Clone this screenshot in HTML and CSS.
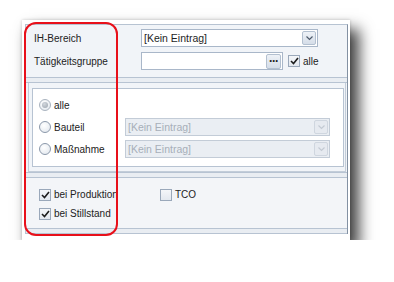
FILE: index.html
```html
<!DOCTYPE html>
<html lang="de">
<head>
    <meta charset="UTF-8">
    <title>IH-Bereich Filter</title>
    <link rel="stylesheet" href="styles.css">
</head>
<body>
    <div class="shot">
        <div class="window">
            <div class="sec top">
                <div class="row">
                    <span class="label">IH-Bereich</span>
                    <div class="combo">
                        <span class="value">[Kein Eintrag]</span>
                        <span class="drop"><svg width="9" height="6" viewBox="0 0 9 6"><path d="M1.5 1.5 L4.5 4.5 L7.5 1.5" fill="none" stroke="#4d5a6b" stroke-width="1.2"/></svg></span>
                    </div>
                </div>
                <div class="row">
                    <span class="label">Tätigkeitsgruppe</span>
                    <div class="textbox">
                        <span class="dots">&middot;&middot;&middot;</span>
                    </div>
                    <span class="check checked"><svg width="9" height="8" viewBox="0 0 9 8"><path d="M1 4 L3.5 6.5 L8 1" fill="none" stroke="#1d1d1d" stroke-width="1.6"/></svg></span>
                    <span class="check-label">alle</span>
                </div>
            </div>
            <div class="sep"></div>
            <div class="sec mid">
                <div class="panel">
                    <div class="group">
                        <div class="opt">
                            <span class="radio selected"><span class="dot"></span></span>
                            <span class="opt-label">alle</span>
                        </div>
                        <div class="opt">
                            <span class="radio"></span>
                            <span class="opt-label">Bauteil</span>
                            <div class="combo disabled">
                                <span class="value">[Kein Eintrag]</span>
                                <span class="drop"><svg width="9" height="6" viewBox="0 0 9 6"><path d="M1.5 1.5 L4.5 4.5 L7.5 1.5" fill="none" stroke="#c3cad3" stroke-width="1.2"/></svg></span>
                            </div>
                        </div>
                        <div class="opt">
                            <span class="radio"></span>
                            <span class="opt-label">Maßnahme</span>
                            <div class="combo disabled">
                                <span class="value">[Kein Eintrag]</span>
                                <span class="drop"><svg width="9" height="6" viewBox="0 0 9 6"><path d="M1.5 1.5 L4.5 4.5 L7.5 1.5" fill="none" stroke="#c3cad3" stroke-width="1.2"/></svg></span>
                            </div>
                        </div>
                    </div>
                </div>
            </div>
            <div class="sep"></div>
            <div class="sec bottom">
                <div class="flags">
                    <div class="flag">
                        <span class="check checked"><svg width="9" height="8" viewBox="0 0 9 8"><path d="M1 4 L3.5 6.5 L8 1" fill="none" stroke="#1d1d1d" stroke-width="1.6"/></svg></span>
                        <span class="check-label">bei Produktion</span>
                    </div>
                    <div class="flag">
                        <span class="check"></span>
                        <span class="check-label">TCO</span>
                    </div>
                    <div class="flag">
                        <span class="check checked"><svg width="9" height="8" viewBox="0 0 9 8"><path d="M1 4 L3.5 6.5 L8 1" fill="none" stroke="#1d1d1d" stroke-width="1.6"/></svg></span>
                        <span class="check-label">bei Stillstand</span>
                    </div>
                </div>
            </div>
            <div class="sep last"></div>
        </div>
        <div class="marker"></div>
    </div>
</body>
</html>
```

FILE: styles.css
```css
body {
    margin: 0;
    background: #fff;
    font-family: "Liberation Sans", Arial, sans-serif;
    font-size: 10px;
    color: #222;
}
.shot {
    position: relative;
    margin: 20px 0 0 22px;
    width: 328px;
    height: 220px;
    box-sizing: border-box;
    padding: 4px 0 0 3px;
    background: #fff;
    box-shadow: 8px 10px 14px 1px rgba(0, 0, 0, 0.75), 0 0 3px rgba(0, 0, 0, 0.2);
}
.window {
    width: 323px;
    height: 210px;
    box-sizing: border-box;
    border-top: 1px solid #b7c3d2;
    border-left: 1px solid #b7c3d2;
    border-right: 1px solid #8391a3;
    background: #f1f4f8;
    display: flex;
    flex-direction: column;
}
.sec.top {
    height: 52px;
    box-sizing: border-box;
    padding: 4px 0 0 8px;
    display: flex;
    flex-direction: column;
    gap: 5px;
}
.row {
    display: flex;
    align-items: center;
    height: 18px;
}
.label {
    width: 107px;
}
.combo {
    width: 177px;
    height: 18px;
    box-sizing: border-box;
    border: 1px solid #a9b7c9;
    background: #fff;
    display: flex;
    align-items: center;
    justify-content: space-between;
    padding: 0 1px 0 2px;
}
.combo .value {
    font-size: 10.5px;
    color: #1e1e1e;
}
.drop {
    width: 14px;
    height: 14px;
    box-sizing: border-box;
    border: 1px solid #b3c0d0;
    border-radius: 2px;
    background: linear-gradient(#eef2f7, #d5dde8);
    display: flex;
    align-items: center;
    justify-content: center;
}
.combo.disabled {
    width: 205px;
    background: #eaeef3;
    border-color: #c3ccd7;
}
.combo.disabled .value {
    color: #a7afb9;
}
.combo.disabled .drop {
    background: #e6eaf0;
    border-color: #cfd6df;
}
.textbox {
    width: 142px;
    height: 18px;
    box-sizing: border-box;
    border: 1px solid #a9b7c9;
    background: #fff;
    display: flex;
    justify-content: flex-end;
    align-items: center;
    padding-right: 1px;
    margin-right: 5px;
}
.dots {
    width: 15px;
    height: 15px;
    box-sizing: border-box;
    border: 1px solid #b3c0d0;
    border-radius: 2px;
    background: linear-gradient(#eef2f7, #d5dde8);
    font-size: 12px;
    font-weight: bold;
    line-height: 12px;
    text-align: center;
    color: #222;
    letter-spacing: -1px;
}
.check {
    width: 12px;
    height: 12px;
    box-sizing: border-box;
    border: 1px solid #9aa8ba;
    background: linear-gradient(#f4f6f9, #e3e8ef);
    display: inline-flex;
    align-items: center;
    justify-content: center;
    margin-right: 3px;
}
.check-label {
    font-size: 10px;
}
.sep {
    height: 4px;
    border-top: 1px solid #b7c3d2;
    border-bottom: 1px solid #b7c3d2;
    background: #e9edf2;
}
.sec.mid {
    height: 89px;
    box-sizing: border-box;
    padding: 0 1px 0 2px;
    display: flex;
}
.panel {
    flex: 1;
    border-left: 1px solid #c3cdd9;
    border-right: 1px solid #c3cdd9;
    border-bottom: 1px solid #c3cdd9;
    padding: 5px 1px 4px 3px;
    display: flex;
}
.group {
    flex: 1;
    border: 1px solid #b7c3d2;
    background: #fff;
    padding: 5px 0 0 6px;
    display: flex;
    flex-direction: column;
}
.opt {
    display: flex;
    align-items: center;
    height: 22px;
}
.radio {
    width: 12px;
    height: 12px;
    box-sizing: border-box;
    border-radius: 50%;
    border: 1px solid #8b98aa;
    background: radial-gradient(circle at 40% 35%, #ffffff, #dfe5ec);
    display: inline-flex;
    align-items: center;
    justify-content: center;
    margin-right: 3px;
}
.radio.selected {
    border-color: #a9b3bf;
}
.radio .dot {
    width: 6px;
    height: 6px;
    border-radius: 50%;
    background: radial-gradient(circle at 40% 35%, #d2d7dd, #9aa3ad);
}
.opt-label {
    width: 71px;
    font-size: 10px;
}
.sec.bottom {
    height: 50px;
    box-sizing: border-box;
    padding: 7px 0 0 13px;
    background: #f3f5f8;
}
.flags {
    display: grid;
    grid-template-columns: 121px auto;
    grid-auto-rows: 19px;
}
.flag {
    display: flex;
    align-items: center;
}
.sep.last {
    height: 4px;
}
.marker {
    position: absolute;
    left: 2px;
    top: 2px;
    width: 94px;
    height: 214px;
    box-sizing: border-box;
    border: 2px solid #e8101a;
    border-radius: 12px;
}
```
